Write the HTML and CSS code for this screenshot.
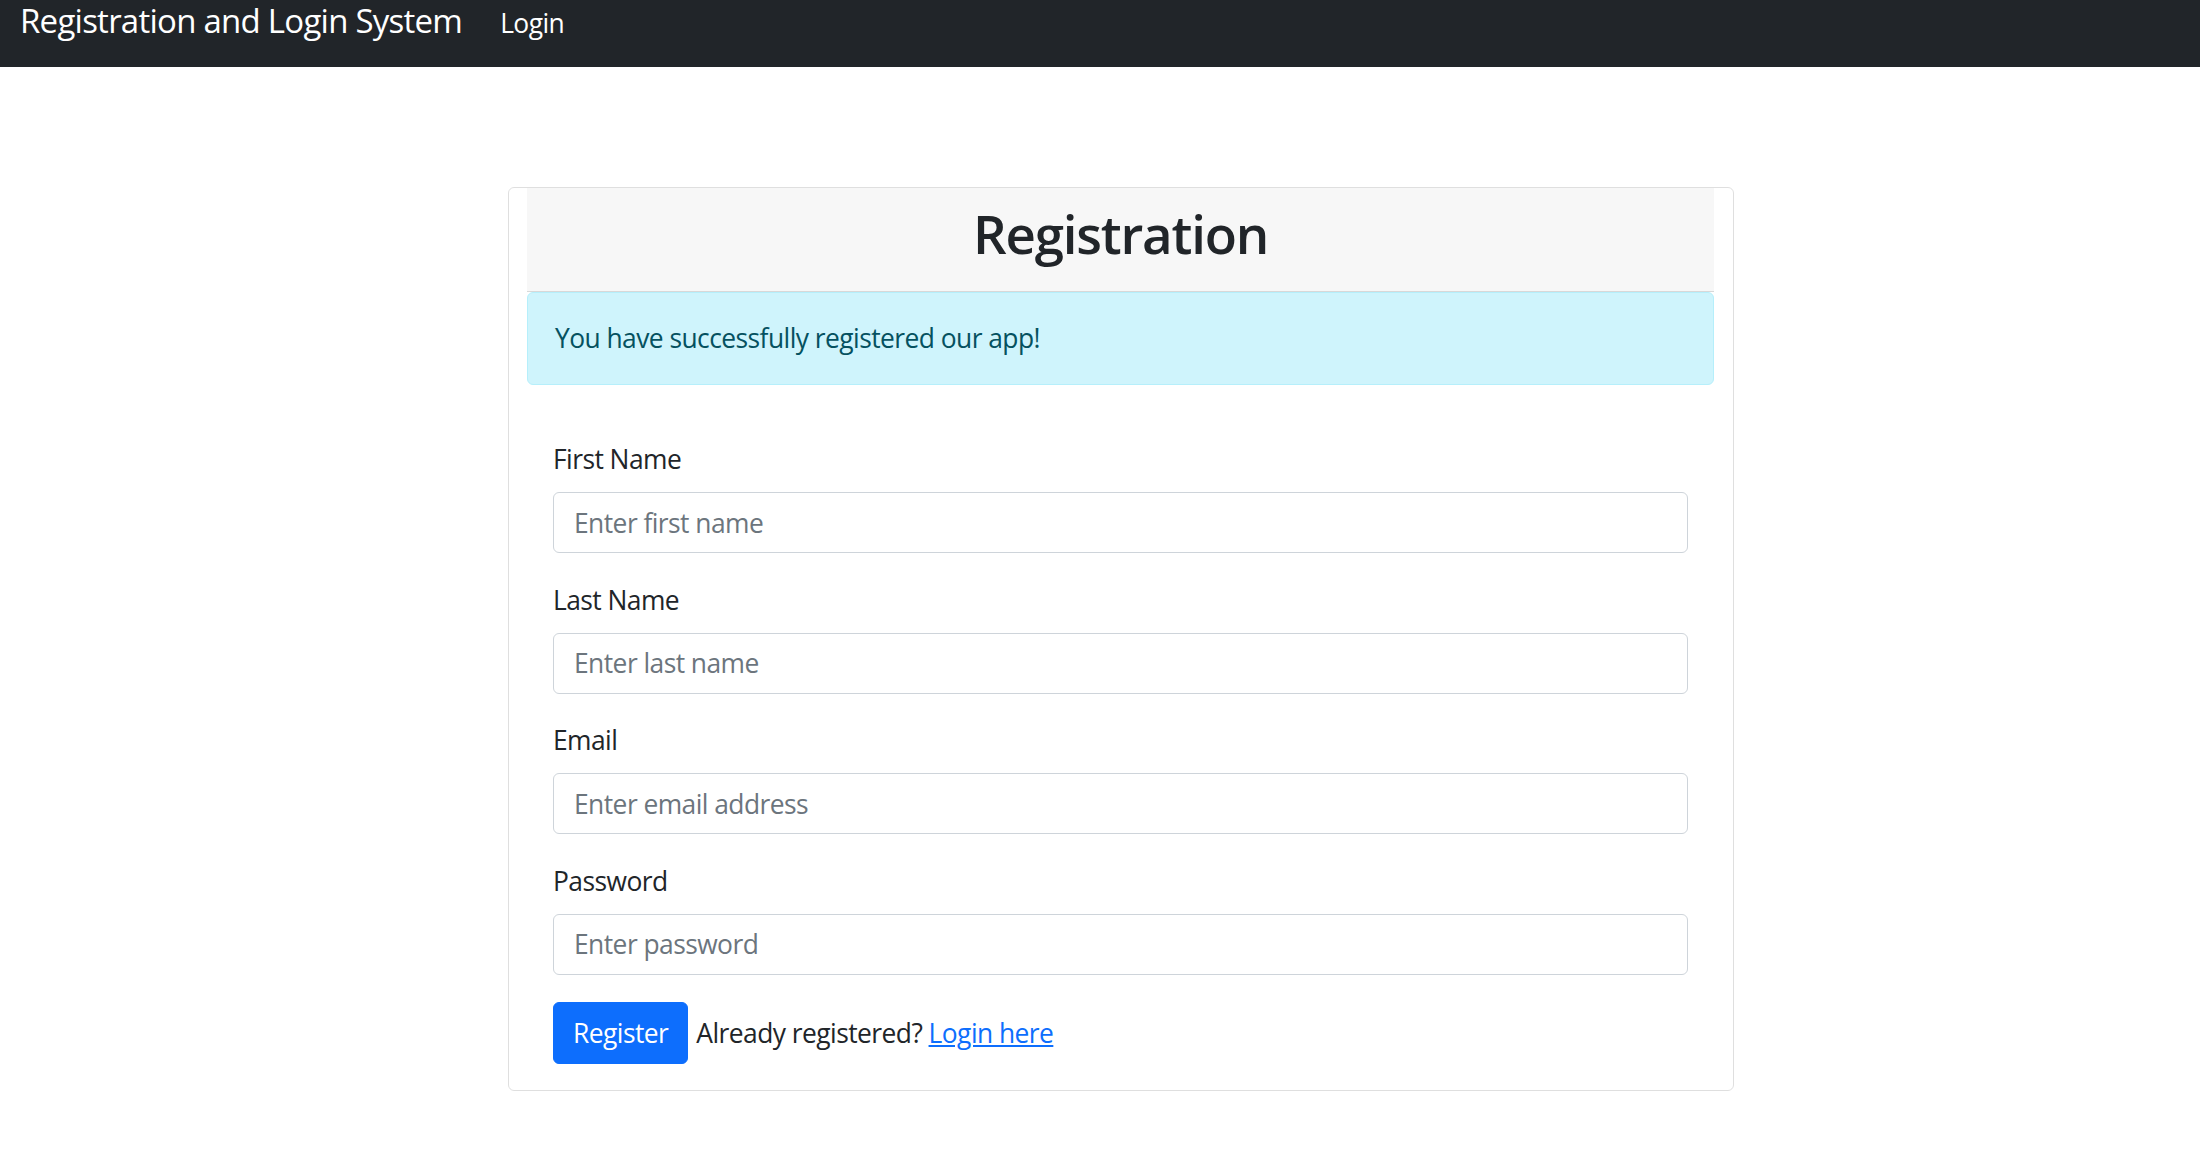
FILE: index.html
```html
<!DOCTYPE html>
<html lang="en">
<head>
<meta charset="utf-8">
<title>Registration and Login System</title>
<link rel="stylesheet" href="styles.css">
</head>
<body>
<nav class="navbar">
  <a class="brand" href="#">Registration and Login System</a>
  <a class="nav-link" href="#">Login</a>
</nav>
<main class="page">
  <div class="card">
    <div class="card-header">
      <h2 class="title">Registration</h2>
    </div>
    <div class="alert">You have successfully registered our app!</div>
    <form class="card-body">
      <div class="field">
        <label class="label" for="fn">First Name</label>
        <input class="input" id="fn" type="text" placeholder="Enter first name">
      </div>
      <div class="field">
        <label class="label" for="ln">Last Name</label>
        <input class="input" id="ln" type="text" placeholder="Enter last name">
      </div>
      <div class="field">
        <label class="label" for="em">Email</label>
        <input class="input" id="em" type="email" placeholder="Enter email address">
      </div>
      <div class="field">
        <label class="label" for="pw">Password</label>
        <input class="input" id="pw" type="password" placeholder="Enter password">
      </div>
      <div class="actions">
        <button class="btn" type="button">Register</button>
        <span class="hint">Already registered? <a class="link" href="#">Login here</a></span>
      </div>
    </form>
  </div>
</main>
</body>
</html>
```

FILE: styles.css
```css
* { box-sizing: border-box; }

html, body {
  margin: 0;
  padding: 0;
  background: #ffffff;
}

body {
  font-family: "Open Sans", "Noto Sans", sans-serif;
  font-size: 26.4px;
  line-height: 1.5;
  letter-spacing: -0.55px;
  color: #212529;
}

.navbar {
  height: 67px;
  background: #212529;
  display: flex;
  align-items: baseline;
  padding: 4px 0 0 20px;
}

.brand {
  color: #ffffff;
  text-decoration: none;
  font-size: 33px;
  line-height: 33px;
  letter-spacing: -0.75px;
  margin-right: 38px;
}

.nav-link {
  color: #ffffff;
  text-decoration: none;
  font-size: 26.4px;
  line-height: 33px;
}

.page {
  padding-top: 120px;
  padding-bottom: 40px;
}

.card {
  margin-left: 508px;
  width: 1226px;
  border: 1px solid rgba(0, 0, 0, 0.125);
  border-radius: 6px;
  padding: 0 19px 0 18px;
}

.card-header {
  background: #f7f7f7;
  border-bottom: 1px solid rgba(0, 0, 0, 0.125);
  padding: 14px 26px 0;
  text-align: center;
}

.title {
  margin: 0 0 26px;
  font-size: 52.8px;
  font-weight: 600;
  line-height: 1.2;
  letter-spacing: -1.2px;
  color: #212529;
}

.alert {
  background: #cff4fc;
  border: 1px solid #b6effb;
  color: #055160;
  border-radius: 6px;
  padding: 26px 27px;
  line-height: 39px;
}

.card-body {
  padding: 55px 26px 26px;
}

.field {
  margin-bottom: 27.5px;
}

.label {
  display: block;
  line-height: 39px;
  margin-bottom: 13px;
}

.input {
  display: block;
  width: 100%;
  height: 61px;
  padding: 0 20px;
  font-family: inherit;
  font-size: 26.4px;
  letter-spacing: -0.55px;
  color: #212529;
  background: #ffffff;
  border: 1px solid #ced4da;
  border-radius: 6px;
  outline: none;
}

.input::placeholder {
  color: #6c757d;
}

.actions {
  display: flex;
  align-items: center;
  gap: 8px;
}

.btn {
  height: 62px;
  padding: 0 19px;
  font-family: inherit;
  font-size: 26.4px;
  letter-spacing: -0.55px;
  color: #ffffff;
  background: #0d6efd;
  border: 1px solid #0d6efd;
  border-radius: 6px;
}

.hint {
  line-height: 39px;
}

.link {
  color: #0d6efd;
  text-decoration: underline;
}
```
